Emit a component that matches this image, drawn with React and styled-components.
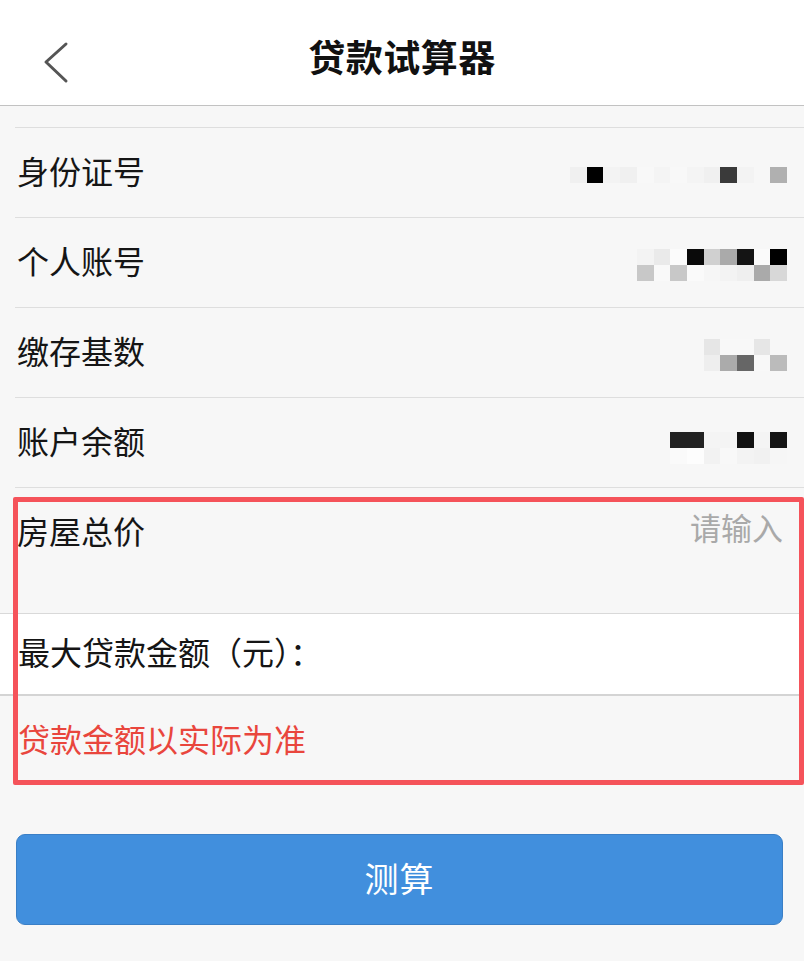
import React from "react";
import styled, { createGlobalStyle } from "styled-components";

const EstiloGlobal = createGlobalStyle`
  html, body {
    margin: 0;
    padding: 0;
    background: #f7f7f7;
    font-family: "Noto Sans CJK SC", "Noto Sans", sans-serif;
    color: #111;
  }
  * { box-sizing: border-box; }
`;

const Pagina = styled.div`
  width: 804px;
  min-height: 961px;
  background: #f7f7f7;
`;

const Cabecera = styled.header`
  height: 106px;
  background: #ffffff;
  border-bottom: 1px solid #c2c2c2;
  display: flex;
  align-items: center;
  justify-content: center;
  position: relative;
`;

const BotonAtras = styled.button`
  position: absolute;
  left: 35px;
  top: 36px;
  width: 40px;
  height: 52px;
  padding: 0;
  border: none;
  background: transparent;
  display: flex;
  align-items: center;
  justify-content: center;
`;

const Titulo = styled.h1`
  margin: 0;
  font-size: 37px;
  font-weight: 700;
  letter-spacing: 0.5px;
  color: #111;
  line-height: 1;
  padding-top: 8px;
`;

const Lista = styled.div`
  margin-top: 21px;
  margin-left: 15px;
  border-top: 1px solid #dedede;
`;

const Fila = styled.div`
  height: 90px;
  border-bottom: 1px solid #dedede;
  display: flex;
  align-items: center;
  justify-content: space-between;
  padding-right: 17px;
`;

const Etiqueta = styled.span`
  font-size: 32px;
  color: ${(p) => p.color || "#151515"};
  line-height: 1;
  padding-left: ${(p) => p.pad || 0}px;
  padding-bottom: 6px;
`;

const Mosaico = styled.div`
  display: grid;
  grid-template-columns: repeat(${(p) => p.cols}, 16.7px);
  grid-auto-rows: 16px;
  margin-top: ${(p) => p.offset || 0}px;
`;

const Celda = styled.span`
  display: block;
  background: ${(p) => p.tono};
`;

const Seccion = styled.div`
  position: relative;
`;

const FilaPrecio = styled.div`
  height: 126px;
  border-bottom: 1px solid #d9d9d9;
  display: flex;
  align-items: flex-start;
  justify-content: space-between;
  padding: 0 21px 0 17px;
`;

const ZonaEtiqueta = styled.div`
  height: 89px;
  display: flex;
  align-items: center;
`;

const Entrada = styled.input`
  height: 89px;
  width: 300px;
  border: none;
  outline: none;
  background: transparent;
  text-align: right;
  font-family: "Noto Sans CJK SC", sans-serif;
  font-size: 31px;
  padding: 0 0 12px 0;
  &::placeholder {
    color: #a9a9a9;
  }
`;

const FilaBlanca = styled.div`
  height: 82px;
  background: #ffffff;
  border-bottom: 2px solid #d4d4d4;
  display: flex;
  align-items: center;
  padding-left: 18px;
`;

const FilaAviso = styled.div`
  height: 90px;
  display: flex;
  align-items: center;
  padding-left: 18px;
`;

const Marco = styled.div`
  position: absolute;
  left: 13px;
  right: 0;
  top: 9px;
  height: 288px;
  border: 5px solid #f5535a;
  border-radius: 2px;
  pointer-events: none;
`;

const BotonCalcular = styled.button`
  display: block;
  margin: 48px 0 0 16px;
  width: 767px;
  height: 91px;
  border: 1px solid #3a7fc6;
  border-radius: 9px;
  background: #418fdd;
  color: #ffffff;
  font-family: "Noto Sans CJK SC", sans-serif;
  font-size: 34px;
  letter-spacing: 1px;
  padding: 0 0 4px 0;
`;

const datos = [
  {
    etiqueta: "身份证号",
    cols: 13,
    offset: 4,
    tonos: [
      "#f0f0f0", "#000000", "#f3f3f3", "#f0f0f0", "#f8f8f8", "#f4f4f4", "#f8f8f8",
      "#f4f4f4", "#f0f0f0", "#3a3a3a", "#f3f3f3", "#f7f7f7", "#b0b0b0",
    ],
  },
  {
    etiqueta: "个人账号",
    cols: 9,
    offset: 4,
    tonos: [
      "#f3f3f3", "#eaeaea", "#fbfbfb", "#0a0a0a", "#d0d0d0", "#aaaaaa", "#141414", "#fafafa", "#000000",
      "#c8c8c8", "#f9f9f9", "#c8c8c8", "#fafafa", "#f6f6f6", "#f3f3f3", "#efefef", "#aaaaaa", "#d8d8d8",
    ],
  },
  {
    etiqueta: "缴存基数",
    cols: 5,
    offset: 4,
    tonos: [
      "#e6e6e6", "#f8f8f8", "#f8f8f8", "#e6e6e6", "#f7f7f7",
      "#eeeeee", "#ababab", "#666666", "#f8f8f8", "#bbbbbb",
    ],
  },
  {
    etiqueta: "账户余额",
    cols: 7,
    offset: 10,
    tonos: [
      "#222222", "#222222", "#f4f4f4", "#f4f4f4", "#111111", "#f4f4f4", "#151515",
      "#fafafa", "#fdfdfd", "#f2f2f2", "#f8f8f8", "#f3f3f3", "#f1f1f1", "#f6f6f6",
    ],
  },
];

const App = () => {
  return (
    <>
      <EstiloGlobal />
      <Pagina>
        <Cabecera>
          <BotonAtras aria-label="返回">
            <svg width="30" height="44" viewBox="0 0 30 44">
              <polyline
                points="26,4 6,22 26,41"
                fill="none"
                stroke="#555"
                strokeWidth="3"
                strokeLinecap="round"
                strokeLinejoin="round"
              />
            </svg>
          </BotonAtras>
          <Titulo>贷款试算器</Titulo>
        </Cabecera>

        <Lista>
          {datos.map((d) => (
            <Fila key={d.etiqueta}>
              <Etiqueta pad={2}>{d.etiqueta}</Etiqueta>
              <Mosaico cols={d.cols} offset={d.offset}>
                {d.tonos.map((t, i) => (
                  <Celda key={i} tono={t} />
                ))}
              </Mosaico>
            </Fila>
          ))}
        </Lista>

        <Seccion>
          <FilaPrecio>
            <ZonaEtiqueta>
              <Etiqueta>房屋总价</Etiqueta>
            </ZonaEtiqueta>
            <Entrada placeholder="请输入" />
          </FilaPrecio>
          <FilaBlanca>
            <Etiqueta>最大贷款金额（元）：</Etiqueta>
          </FilaBlanca>
          <FilaAviso>
            <Etiqueta color="#e9463d">贷款金额以实际为准</Etiqueta>
          </FilaAviso>
          <Marco />
        </Seccion>

        <BotonCalcular>测算</BotonCalcular>
      </Pagina>
    </>
  );
};

export default App;
